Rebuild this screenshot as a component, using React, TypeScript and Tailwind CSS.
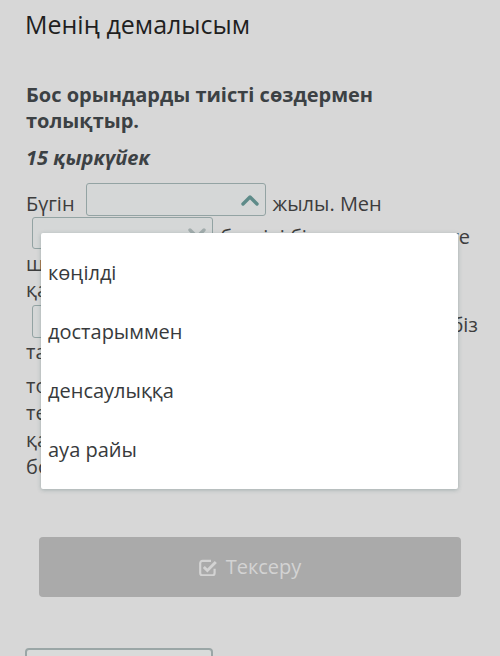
import React from 'react';

const FONT = { fontFamily: '"Open Sans", "Noto Sans", sans-serif' };

// Chevron glyph used inside the select boxes
function Chevron({ up, className }: { up?: boolean; className?: string }) {
  return (
    <svg width="18" height="12" viewBox="0 0 18 12" className={className}>
      <polyline
        points={up ? '2,10 9,3 16,10' : '2,3 9,10 16,3'}
        fill="none"
        stroke="currentColor"
        strokeWidth="3.4"
        strokeLinecap="round"
        strokeLinejoin="round"
      />
    </svg>
  );
}

function Blank({ up, className }: { up?: boolean; className?: string }) {
  return (
    <span
      className={`flex shrink-0 items-center justify-end rounded-[3px] border border-[#93a3a3] bg-[#d5d7d7] pr-[6px] ${className ?? ''}`}
    >
      <Chevron up={up} className={up ? 'text-[#5e8b89]' : 'text-[#a3adad]'} />
    </span>
  );
}

// Fontawesome-style "check-square-o"
function CheckSquare() {
  return (
    <svg width="18" height="17" viewBox="1 1 15 14" className="text-[#d3d3d3]">
      <path
        d="M11 2.5H4a2 2 0 0 0-2 2v8a2 2 0 0 0 2 2h8a2 2 0 0 0 2-2v-3.5"
        fill="none"
        stroke="currentColor"
        strokeWidth="1.8"
      />
      <polyline points="5,7.5 8,10.5 15,3.5" fill="none" stroke="currentColor" strokeWidth="2.4" />
    </svg>
  );
}

const options = ['көңілді', 'достарыммен', 'денсаулыққа', 'ауа райы'];

export default function App() {
  return (
    <div className="min-h-screen overflow-hidden bg-[#d7d7d7] px-[26px] pt-[6px]" style={FONT}>
      <h1 className="-ml-[1px] text-[25px] leading-[36px] text-[#1f1f1f]">Менің демалысым</h1>

      <p className="mt-[40px] text-[20px] font-bold leading-[26px] text-[#3c4144]">
        Бос орындарды тиісті сөздермен
        <br />
        толықтыр.
      </p>
      <p className="mt-[11px] text-[20px] font-bold italic leading-[26px] text-[#3c4144]">15 қыркүйек</p>

      {/* fill-in text with the open option list above it */}
      <div className="relative mt-[12px] whitespace-nowrap text-[20px] leading-[26px] text-[#3d3d3d]">
        <div className="flex h-[34px] items-start">
          <span className="mt-[8px]">Бүгін</span>
          <Blank up className="ml-[11px] h-[33px] w-[180px]" />
          <span className="ml-[7px] mt-[8px]">жылы. Мен</span>
        </div>
        <div className="flex h-[34px] items-start">
          <Blank className="ml-[6px] h-[32px] w-[181px]" />
          <span className="ml-[7px] mt-[7px]">белгілі бір жерге</span>
          <span className="ml-auto mr-[4px] mt-[7px]">келуге</span>
        </div>
        <div>шештім. Біз қала сыртындағы көлге</div>
        <div>қарай жолға шықтық. Жолда</div>
        <div className="flex h-[36px] items-start">
          <Blank className="ml-[6px] mt-[2px] h-[33px] w-[181px]" />
          <span className="ml-[7px] mt-[9px]">әңгімелестік. Сосын</span>
          <span className="-mr-[4px] ml-auto mt-[9px]">біз</span>
        </div>
        <div>табиғат аясында демалдық.</div>
        <div className="mt-[7px] leading-[27px]">
          <div>топ болып ойын ойнадық, доп</div>
          <div>тептік, суда шомылдық. Кешке</div>
          <div>қайтқанда бәріміздің көңіліміз</div>
          <div>болды.</div>
        </div>

        <ul className="absolute left-[15px] top-[50px] w-[417px] rounded-[2px] bg-white py-[10px] text-[#373a3c] shadow-[0_1px_4px_rgba(40,80,80,0.3)]">
          {options.map((o) => (
            <li key={o} className="flex h-[59px] items-center px-[7px]">
              {o}
            </li>
          ))}
        </ul>
      </div>

      <div className="mx-[13px] mt-[57px] flex h-[60px] items-center justify-center gap-[9px] rounded-[4px] bg-[#aaaaaa] text-[20px] text-[#d3d3d3]">
        <CheckSquare />
        <span>Тексеру</span>
      </div>

      <div className="-ml-[1px] mt-[51px] h-[40px] w-[188px] rounded-[4px] border-2 border-[#9aa6a6] bg-[#d9dbda]" />
    </div>
  );
}
